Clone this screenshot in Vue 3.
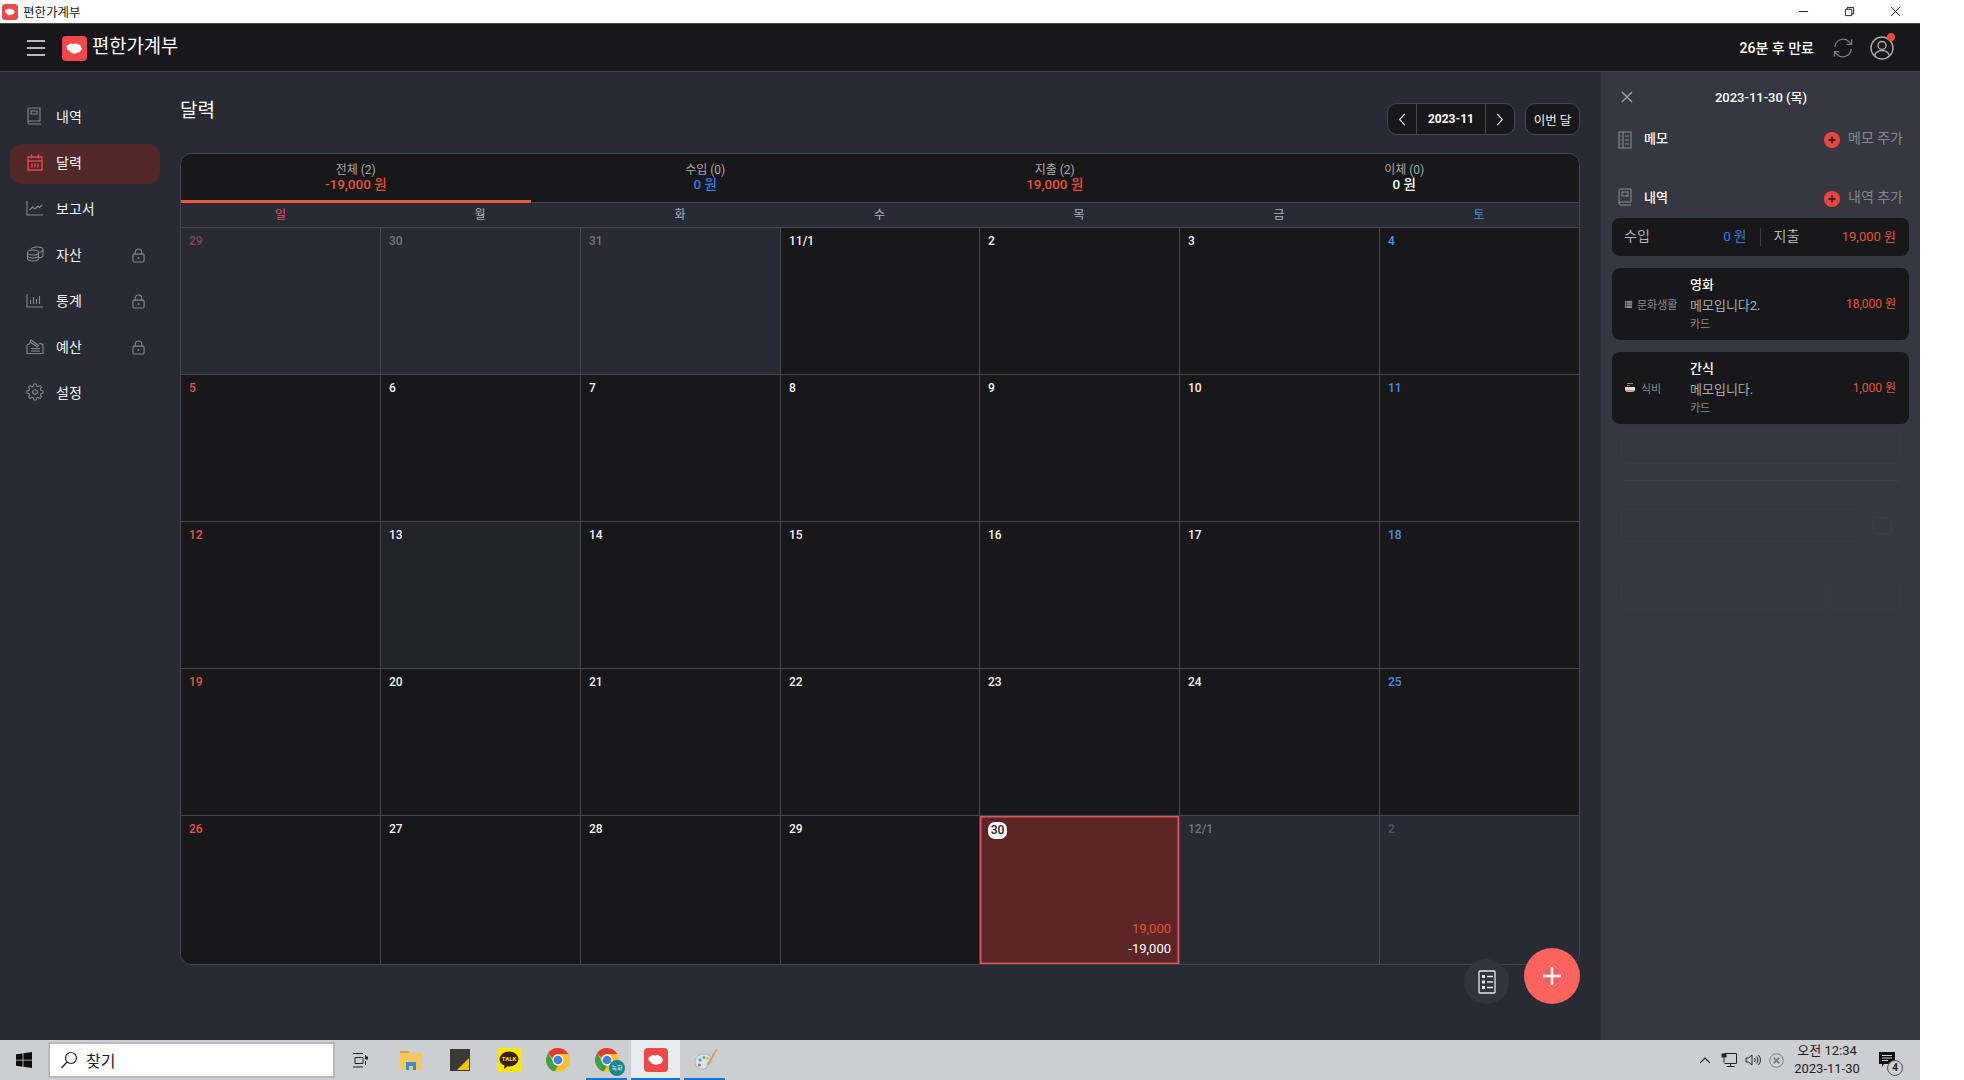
<script setup>
const navItems = [
  { label: '내역', locked: false, paths: ['M3.5 1H14v13H3.5A1.5 1.5 0 0 0 2 15.5v-13A1.5 1.5 0 0 1 3.5 1z', 'M2 15.5A1.5 1.5 0 0 0 3.5 17H15', 'M5 4h6v3H5z'] },
  { label: '달력', active: true, paths: ['M2 4h14v13H2z', 'M2 8h14', 'M5.5 1.5v4', 'M12.5 1.5v4', 'M6 10.5v4', 'M9 10.5v4', 'M12 10.5v4'] },
  { label: '보고서', paths: ['M1 2v14h16', 'M3.5 11l3-3 2.5 2 3-3 1.5 1.5 2.5-2.5'] },
  { label: '자산', locked: true, paths: ['M1.5 7.5C1.5 6 4 5 7 5s5.5 1 5.5 2.5S10 10 7 10 1.5 9 1.5 7.5z', 'M1.5 7.5v6C1.5 15 4 16 7 16s5.5-1 5.5-2.5v-6', 'M1.5 10.5C1.5 12 4 13 7 13s5.5-1 5.5-2.5', 'M5 4.5C5.5 3 8 2 11 2s6 1 6 2.5v6c0 1-1.5 2-4.5 2.5', 'M12.5 7.5c2.800-.3 4.500-1.500 4.500-3'] },
  { label: '통계', locked: true, paths: ['M1 3v13h16', 'M4.500 13V9', 'M7.500 13V6', 'M10.500 13V8', 'M13.500 13V5'] },
  { label: '예산', locked: true, paths: ['M1 8v8.500h16V7.500L13 6', 'M1 8l3-1.500', 'M5 3l7.500 5.500-1 1.500L4 5z', 'M5 11.500h9', 'M5 14h9'] },
  { label: '설정', gear: true, paths: ['M12 15a3 3 0 1 0 0-6 3 3 0 0 0 0 6z', 'M19.400 15a1.650 1.650 0 0 0 .33 1.820l.06.06a2 2 0 0 1 0 2.830 2 2 0 0 1-2.830 0l-.06-.06a1.650 1.650 0 0 0-1.820-.33 1.650 1.650 0 0 0-1 1.510V21a2 2 0 0 1-2 2 2 2 0 0 1-2-2v-.09A1.650 1.650 0 0 0 9 19.400a1.650 1.650 0 0 0-1.820.33l-.06.06a2 2 0 0 1-2.830 0 2 2 0 0 1 0-2.830l.06-.06a1.650 1.650 0 0 0 .33-1.820 1.650 1.650 0 0 0-1.510-1H3a2 2 0 0 1-2-2 2 2 0 0 1 2-2h.09A1.650 1.650 0 0 0 4.600 9a1.650 1.650 0 0 0-.33-1.820l-.06-.06a2 2 0 0 1 0-2.830 2 2 0 0 1 2.830 0l.06.06a1.650 1.650 0 0 0 1.820.33H9a1.650 1.650 0 0 0 1-1.510V3a2 2 0 0 1 2-2 2 2 0 0 1 2 2v.09a1.650 1.650 0 0 0 1 1.510 1.650 1.650 0 0 0 1.820-.33l.06-.06a2 2 0 0 1 2.830 0 2 2 0 0 1 0 2.830l-.06.06a1.650 1.650 0 0 0-.33 1.820V9a1.650 1.650 0 0 0 1.510 1H21a2 2 0 0 1 2 2 2 2 0 0 1-2 2h-.09a1.650 1.650 0 0 0-1.510 1z'] }
]

const tabs = [
  { label: '전체 (2)', value: '-19,000 원', tone: 'red', active: true },
  { label: '수입 (0)', value: '0 원', tone: 'blue' },
  { label: '지출 (2)', value: '19,000 원', tone: 'red' },
  { label: '이체 (0)', value: '0 원', tone: 'white' }
]

const weekdays = ['일', '월', '화', '수', '목', '금', '토']

const labels = [
  '29', '30', '31', '11/1', '2', '3', '4',
  '5', '6', '7', '8', '9', '10', '11',
  '12', '13', '14', '15', '16', '17', '18',
  '19', '20', '21', '22', '23', '24', '25',
  '26', '27', '28', '29', '30', '12/1', '2'
]
const outside = new Set([0, 1, 2, 33, 34])
const cells = labels.map((label, i) => ({
  label,
  outside: outside.has(i),
  sun: i % 7 === 0,
  sat: i % 7 === 6,
  first: i % 7 === 0,
  top: i < 7,
  hover: i === 15,
  today: i === 32
}))

const entries = [
  { cat: '문화생활', icon: 'film', name: '영화', memo: '메모입니다2.', pay: '카드', amount: '18,000 원' },
  { cat: '식비', icon: 'food', name: '간식', memo: '메모입니다.', pay: '카드', amount: '1,000 원' }
]

const blob = 'M4 8.500C2.500 8.500 1.500 7.500 1.800 6.300 1 5.500 2 3.800 3.500 4 4 2.800 6 2.600 7 3.300 8.200 2.500 10 2.700 10.700 3.700 12.300 3.500 13.300 4.800 13 5.800 14.200 6.300 14 8 13 8.300 12.800 9.700 11.200 10.500 10 10 9 11.200 6.600 11.300 5.800 10.300 4.800 10.500 3.800 9.700 4 8.500z'
</script>

<template>
  <div class="window">
    <div class="titlebar">
      <svg class="title-logo" viewBox="0 0 16 16"><rect width="16" height="16" rx="3.500" fill="#f04848" /><path :d="blob" fill="#fff" transform="translate(8 8) scale(.8) translate(-7.900 -6.900)" /></svg>
      <span class="title-text">편한가계부</span>
      <div class="win-controls">
        <svg viewBox="0 0 12 12" class="wc wc-min"><path d="M1 6h10" stroke="#111" /></svg>
        <svg viewBox="0 0 12 12" class="wc wc-res"><path d="M1.500 3.500h7v7h-7zM3.500 3.500v-2h7v7h-2" fill="none" stroke="#111" /></svg>
        <svg viewBox="0 0 12 12" class="wc"><path d="M1 1l10 10M11 1L1 11" stroke="#111" /></svg>
      </div>
    </div>

    <header class="appbar">
      <svg class="burger" viewBox="0 0 18 16"><path d="M0 1h18M0 8h18M0 15h18" stroke="#f2f2f2" stroke-width="1.600" /></svg>
      <svg class="app-logo" viewBox="0 0 16 16"><rect width="16" height="16" rx="2.500" fill="#f04848" /><path :d="blob" fill="#fff" transform="translate(8 8) scale(.8) translate(-7.900 -6.900)" /></svg>
      <span class="app-name">편한가계부</span>
      <span class="expiry">26분 후 만료</span>
      <svg class="refresh" viewBox="0 0 24 24" fill="none" stroke="#7b7e84" stroke-width="1.300"><path d="M3 11a9.200 9.200 0 0 1 16-5.500L21.500 8" /><path d="M21.500 2.500V8H16" /><path d="M21 13a9.200 9.200 0 0 1-16 5.500L2.500 16" /><path d="M2.500 21.500V16H8" /></svg>
      <div class="user">
        <svg viewBox="0 0 24 24" fill="none" stroke="#a9abaf" stroke-width="1.400"><circle cx="12" cy="12" r="11" /><circle cx="12" cy="9.500" r="4" /><path d="M4.500 20c1-3.800 4-5.500 7.500-5.500s6.500 1.700 7.500 5.500" /></svg>
        <i class="user-dot"></i>
      </div>
    </header>

    <div class="body">
      <nav class="sidebar">
        <a v-for="item in navItems" :key="item.label" class="nav-item" :class="{ active: item.active }">
          <svg class="nav-icon" :viewBox="item.gear ? '0 0 24 24' : '0 0 18 18'" fill="none" :stroke="item.active ? '#e5484a' : '#85888e'" :stroke-width="item.gear ? 1.500 : item.active ? 1.400 : 1.100">
            <path v-for="d in item.paths" :key="d" :d="d" />
          </svg>
          <span class="nav-label">{{ item.label }}</span>
          <svg v-if="item.locked" class="lock" viewBox="0 0 14 16" fill="none" stroke="#85888e" stroke-width="1.200"><rect x="1" y="6.500" width="12" height="8.500" rx="1.500" /><path d="M3.500 6.500V4.500a3.500 3.500 0 0 1 7 0v2" /><circle cx="7" cy="10.700" r="1" fill="#85888e" stroke="none" /></svg>
        </a>
      </nav>

      <main class="main">
        <div class="main-head">
          <h1 class="page-title">달력</h1>
          <div class="controls">
            <div class="picker">
              <button class="pick-arrow"><svg viewBox="0 0 8 14" fill="none" stroke="#e4e4e4" stroke-width="1.300"><path d="M7 1L1.500 7 7 13" /></svg></button>
              <span class="pick-month">2023-11</span>
              <button class="pick-arrow pick-next"><svg viewBox="0 0 8 14" fill="none" stroke="#e4e4e4" stroke-width="1.300"><path d="M1 1l5.500 6L1 13" /></svg></button>
            </div>
            <button class="this-month">이번 달</button>
          </div>
        </div>

        <section class="calendar">
          <div class="tabs">
            <div v-for="tab in tabs" :key="tab.label" class="tab" :class="{ active: tab.active }">
              <span class="tab-label">{{ tab.label }}</span>
              <span class="tab-value" :class="tab.tone">{{ tab.value }}</span>
            </div>
          </div>
          <div class="weekdays">
            <span v-for="(d, i) in weekdays" :key="d" :class="{ sun: i === 0, sat: i === 6 }">{{ d }}</span>
          </div>
          <div class="grid">
            <div
              v-for="(c, i) in cells"
              :key="i"
              class="cell"
              :class="{ outside: c.outside, sun: c.sun, sat: c.sat, first: c.first, top: c.top, hover: c.hover, today: c.today }"
            >
              <span class="day">{{ c.label }}</span>
              <div v-if="c.today" class="cell-amounts">
                <span class="red">19,000</span>
                <span>-19,000</span>
              </div>
            </div>
          </div>
        </section>

        <button class="fab-list">
          <svg viewBox="0 0 18 24" fill="none" stroke="#e8e8e8" stroke-width="1.300"><rect x="1" y="1" width="16" height="22" rx="1" /><path d="M4 5h3v3H4zM4 10.500h3v3H4zM4 16h3v3H4z" fill="#e8e8e8" stroke="none" /><path d="M9 6.500h6M9 12h6M9 17.500h6" /></svg>
        </button>
        <button class="fab-add">
          <svg viewBox="0 0 20 20"><path d="M10 1v18M1 10h18" stroke="#fff" stroke-width="2.400" /></svg>
        </button>
      </main>

      <aside class="panel">
        <div class="panel-head">
          <svg class="panel-close" viewBox="0 0 12 12"><path d="M1 1l10 10M11 1L1 11" stroke="#9a9ca1" stroke-width="1.500" /></svg>
          <span class="panel-date">2023-11-30 (목)</span>
        </div>

        <div class="section-row memo-row">
          <svg class="sec-icon" viewBox="0 0 14 18" fill="none" stroke="#8d9095"><rect x="1" y="1" width="12" height="16" /><path d="M5 1v16M2.500 5h1M2.500 9h1M2.500 13h1M7 5h4M7 9h4M7 13h4" /></svg>
          <span class="sec-title strong">메모</span>
          <span class="add-btn"><i class="add-dot"><svg viewBox="0 0 10 10"><path d="M5 1.500v7M1.500 5h7" stroke="#2b2b2b" stroke-width="1.800" /></svg></i>메모 주가</span>
        </div>

        <div class="section-row list-row">
          <svg class="sec-icon" viewBox="0 0 14 18" fill="none" stroke="#8d9095"><path d="M2.500 1H13v13H2.500A1.500 1.500 0 0 0 1 15.500v-13A1.500 1.500 0 0 1 2.500 1z" /><path d="M1 15.500A1.500 1.500 0 0 0 2.500 17H13" /><rect x="4" y="4" width="6" height="4" /></svg>
          <span class="sec-title">내역</span>
          <span class="add-btn"><i class="add-dot"><svg viewBox="0 0 10 10"><path d="M5 1.500v7M1.500 5h7" stroke="#2b2b2b" stroke-width="1.800" /></svg></i>내역 추가</span>
        </div>

        <div class="summary">
          <div class="sum-group">
            <span class="sum-label">수입</span>
            <span class="sum-val blue">0 원</span>
          </div>
          <i class="sum-div"></i>
          <div class="sum-group">
            <span class="sum-label">지출</span>
            <span class="sum-val red">19,000 원</span>
          </div>
        </div>

        <article v-for="e in entries" :key="e.name" class="entry">
          <div class="entry-cat">
            <svg v-if="e.icon === 'film'" class="cat-icon" viewBox="0 0 10 10"><path d="M1 1h8v8H1z" fill="#8a8d92" /><path d="M1 3.500h8M1 6h8M3 1v8" stroke="#3a3c40" stroke-width=".8" /></svg>
            <svg v-else class="cat-icon food" viewBox="0 0 12 12"><path d="M3 1.500h6M3 3.500h3" stroke="#b87a4a" /><path d="M1 5h10v2a3 3 0 0 1-3 3H4a3 3 0 0 1-3-3z" fill="#e6dfd8" /><path d="M2 9h8" stroke="#d45b5b" /></svg>
            <span>{{ e.cat }}</span>
          </div>
          <div class="entry-main">
            <span class="entry-name">{{ e.name }}</span>
            <span class="entry-memo">{{ e.memo }}</span>
            <span class="entry-pay">{{ e.pay }}</span>
          </div>
          <span class="entry-amount">{{ e.amount }}</span>
        </article>

        <div class="ghost">
          <div class="ghost-box ghost-a"></div>
          <div class="ghost-line"></div>
          <div class="ghost-row">
            <div class="ghost-box ghost-b"></div>
            <div class="ghost-box ghost-c"></div>
          </div>
          <div class="ghost-row ghost-last">
            <div class="ghost-box ghost-d"></div>
            <div class="ghost-box ghost-e"></div>
          </div>
        </div>
      </aside>
    </div>

    <footer class="taskbar">
      <svg class="tb-win" viewBox="0 0 16 16"><path d="M0 2.300l6.600-.9v6.300H0zM7.400 1.300L16 0v7.700H7.400zM0 8.500h6.600v6.200L0 13.800zM7.400 8.500H16V16l-8.600-1.200z" fill="#0d0d0d" /></svg>
      <div class="tb-search">
        <svg viewBox="0 0 18 18" fill="none" stroke="#222" stroke-width="1.200"><circle cx="11" cy="7" r="5.500" /><path d="M7 11l-5.500 6" /></svg>
        <span>찾기</span>
      </div>
      <div class="tb-apps">
        <div class="tb-slot tb-view">
          <svg viewBox="0 0 16 16" fill="none" stroke="#222"><path d="M1 1.500h10M3 5.500h8v6H3zM1 15h10" /><path d="M13.500 3v10" stroke-dasharray="4 2" /><rect x="13" y="4.500" width="3" height="3" fill="#222" stroke="none" /></svg>
        </div>
        <div class="tb-slot">
          <svg viewBox="0 0 24 24"><path d="M1 3h8l2 2h12v17H1z" fill="#f6c75c" /><path d="M1 3h8l2 2H1z" fill="#d9a23a" /><path d="M7 14h10v8h-3v-4h-4v4H7z" fill="#2f8fd8" /></svg>
        </div>
        <div class="tb-slot">
          <svg viewBox="0 0 24 24"><path d="M2 1h20v22H2z" fill="#383838" /><path d="M21 10v12H9z" fill="#f7c600" /></svg>
        </div>
        <div class="tb-slot">
          <svg viewBox="0 0 24 24"><rect width="24" height="24" rx="2" fill="#ffe600" /><ellipse cx="12" cy="11" rx="9.500" ry="7.500" fill="#3a1d1d" /><path d="M8 16l-1 5 5-4z" fill="#3a1d1d" /><text x="12" y="13" text-anchor="middle" font-size="6" font-weight="700" fill="#ffe600" font-family="Roboto, sans-serif">TALK</text></svg>
        </div>
        <div class="tb-slot">
          <svg viewBox="0 0 24 24"><circle cx="12" cy="12" r="12" fill="#fbc02d" /><path d="M12 0a12 12 0 0 1 10.400 6H12a6 6 0 0 0-5.700 4L2.200 5A12 12 0 0 1 12 0z" fill="#e53935" /><path d="M2.200 5l4.700 8a6 6 0 0 0 5.100 5l-3.500 5.500A12 12 0 0 1 2.200 5z" fill="#43a047" /><circle cx="12" cy="12" r="5.500" fill="#fff" /><circle cx="12" cy="12" r="4.300" fill="#3f7fe8" /></svg>
        </div>
        <div class="tb-slot tb-under tb-rec">
          <svg viewBox="0 0 24 24"><circle cx="12" cy="12" r="12" fill="#fbc02d" /><path d="M12 0a12 12 0 0 1 10.400 6H12a6 6 0 0 0-5.700 4L2.200 5A12 12 0 0 1 12 0z" fill="#e53935" /><path d="M2.200 5l4.700 8a6 6 0 0 0 5.100 5l-3.500 5.500A12 12 0 0 1 2.200 5z" fill="#43a047" /><circle cx="12" cy="12" r="5.500" fill="#fff" /><circle cx="12" cy="12" r="4.300" fill="#3f7fe8" /></svg>
          <span class="rec-badge">녹화</span>
        </div>
        <div class="tb-slot tb-under tb-current">
          <svg viewBox="0 0 24 24"><rect width="24" height="24" rx="4" fill="#f04848" /><path :d="blob" fill="#fff" transform="translate(12 12) scale(1.200) translate(-7.900 -6.900)" /></svg>
        </div>
        <div class="tb-slot tb-under">
          <svg viewBox="0 0 24 24"><path d="M2 14c0-5 4-8 9-8 5 0 8 2.500 8 6 0 2.500-2 3-3.500 3-1.500 0-2 1-1.500 2.500.5 2-1 3.500-4 3.500-4.500 0-8-3-8-7z" fill="#d8e2ea" stroke="#8aa0b0" stroke-width=".6" /><circle cx="7" cy="12" r="1.500" fill="#3f9ad8" /><circle cx="11" cy="9.500" r="1.500" fill="#7bb84a" /><circle cx="15" cy="10.500" r="1.400" fill="#e8b93a" /><circle cx="6.500" cy="17" r="1.500" fill="#d85a5a" /><path d="M23 1l-9 15 1.800 1L24 2z" fill="#c99a5a" /></svg>
        </div>
      </div>
      <div class="tb-tray">
        <svg class="tray-up" viewBox="0 0 12 7" fill="none" stroke="#222" stroke-width="1.100"><path d="M1 6l5-5 5 5" /></svg>
        <svg class="tray-net" viewBox="0 0 16 16" fill="none" stroke="#222"><path d="M3.500 1.500h12v10h-12M9.500 11.500v3M5.500 14.500h8" /><rect x=".5" y="1.500" width="5" height="4" fill="#222" stroke="none" /><path d="M3 5.500v5" /></svg>
        <svg class="tray-vol" viewBox="0 0 16 16" fill="none" stroke="#222"><path d="M1 6h2.500L7 3v10L3.500 10H1z" /><path d="M9.500 6a3 3 0 0 1 0 4M11.500 4.500a5 5 0 0 1 0 7M13.500 3a8 8 0 0 1 0 10" /></svg>
        <svg class="tray-x" viewBox="0 0 16 16"><circle cx="8" cy="8" r="7.200" fill="#cfd0d2" stroke="#77797c" /><path d="M5 5l6 6M11 5l-6 6" stroke="#77797c" stroke-width="1.800" /></svg>
        <div class="clock"><span>오전 12:34</span><span>2023-11-30</span></div>
        <div class="notify">
          <svg viewBox="0 0 16 16"><path d="M0 0h16v12H5l-2 3v-3H0z" fill="#111" /><path d="M3 3.500h10M3 6h10M3 8.500h6" stroke="#cfd0d2" /></svg>
          <span class="notify-count">4</span>
        </div>
      </div>
    </footer>
  </div>
</template>

<style>
html, body { margin: 0; background: #fff; }
</style>

<style scoped>
* { box-sizing: border-box; }
button { font: inherit; color: inherit; padding: 0; cursor: pointer; }

.window {
  width: 1920px;
  height: 1080px;
  display: flex;
  flex-direction: column;
  font-family: Roboto, "Noto Sans CJK KR", sans-serif;
  background: #282b33;
  color: #fff;
  overflow: hidden;
}

/* Title bar */
.titlebar { height: 23px; flex: none; background: #fff; display: flex; align-items: center; padding-left: 2px; color: #222; }
.title-logo { width: 16px; height: 16px; }
.title-text { margin-left: 5px; font-size: 12.500px; }
.win-controls { margin-left: auto; display: flex; align-items: center; padding-right: 19px; gap: 35px; }
.wc { width: 11px; height: 11px; display: block; }

/* App bar */
.appbar { height: 49px; flex: none; background: #18181b; border-top: 1px solid #4a4a4a; border-bottom: 1px solid #3f424a; display: flex; align-items: center; }
.burger { width: 18px; height: 16px; margin-left: 27px; }
.app-logo { width: 25px; height: 25px; margin-left: 17px; margin-top: 2px; }
.app-name { margin-left: 5px; font-size: 18.800px; margin-top: -7px; }
.expiry { margin-left: auto; font-size: 14px; font-weight: 500; margin-top: -1px; }
.refresh { width: 22px; height: 22px; margin-left: 18px; }
.user { width: 24px; height: 24px; margin-left: 16px; margin-right: 26px; position: relative; }
.user svg { width: 24px; height: 24px; display: block; }
.user-dot { position: absolute; top: -3px; right: -1px; width: 8px; height: 8px; border-radius: 50%; background: #f0483e; }

/* Body */
.body { height: 968px; flex: none; display: flex; }

.sidebar { width: 180px; flex: none; padding: 26px 20px 0 10px; display: flex; flex-direction: column; gap: 6px; }
.nav-item { height: 40px; border-radius: 12px; display: flex; align-items: center; padding: 0 15px 4px 16px; font-size: 14px; }
.nav-item.active { background: #532829; }
.nav-icon { width: 18px; height: 18px; flex: none; }
.nav-label { margin-left: 12px; color: #f4f4f4; }
.lock { width: 13px; height: 15px; margin-left: auto; margin-top: 3px; }

.main { width: 1420px; flex: none; padding: 28px 20px 0 0; position: relative; }
.main-head { display: flex; justify-content: space-between; align-items: flex-start; height: 35px; margin-bottom: 18px; }
.page-title { margin: 0; font-size: 19px; font-weight: 400; line-height: 22px; }
.controls { display: flex; gap: 10px; margin-top: 3px; }
.picker { display: flex; width: 128px; height: 32px; background: #18181b; border: 1px solid #44474f; border-radius: 10px; overflow: hidden; }
.pick-arrow { width: 28px; flex: none; background: none; border: 0; display: flex; align-items: center; justify-content: center; }
.pick-arrow svg { width: 8px; height: 13px; }
.pick-month { flex: 1; border-left: 1px solid #44474f; border-right: 1px solid #44474f; text-align: center; line-height: 30px; font-size: 12px; font-weight: 700; }
.this-month { width: 55px; height: 32px; background: #18181b; border: 1px solid #44474f; border-radius: 10px; font-size: 12.500px; color: #f0f0f0; }

/* Calendar */
.calendar { width: 1400px; height: 812px; border: 1px solid #44474f; border-radius: 12px; overflow: hidden; background: #18181b; }
.tabs { display: grid; grid-template-columns: repeat(4, 1fr); height: 49px; border-bottom: 1px solid #44474f; background: #18181b; }
.tab { display: flex; flex-direction: column; align-items: center; justify-content: flex-start; padding-top: 10px; position: relative; }
.tab.active::after { content: ""; position: absolute; left: 0; right: 0; bottom: -1px; height: 3px; background: #e8593f; }
.tab-label { font-size: 12px; line-height: 13px; color: #a5a8ad; }
.tab-value { font-size: 13.500px; line-height: 16px; font-weight: 500; margin-top: -1px; }
.red { color: #e8503a; }
.blue { color: #2c7ce5; }
.white { color: #fff; }

.weekdays { display: grid; grid-template-columns: 199px 200px 200px 199px 200px 200px 200px; height: 25px; background: #282b33; border-bottom: 1px solid #44474f; font-size: 12px; color: #aeb1b6; text-align: center; line-height: 25px; }
.weekdays .sun { color: #e05555; }
.weekdays .sat { color: #4a90e2; }

.grid { display: grid; grid-template-columns: 199px 200px 200px 199px 200px 200px 200px; grid-template-rows: 146px 147px 147px 147px 149px; }
.cell { background: #18181b; border-left: 1px solid #44474f; border-top: 1px solid #44474f; padding: 5px 8px 0; position: relative; font-size: 12px; }
.cell.first { border-left: 0; }
.cell.top { border-top: 0; }
.cell.hover { background: #232427; }
.cell.outside { background: #282b33; }
.day { font-weight: 500; color: #f4f4f4; line-height: 16px; display: block; }
.cell.sun .day { color: #e9504e; }
.cell.sat .day { color: #4a90e2; }
.cell.outside .day { color: #74777c; }
.cell.outside.sun .day { color: #7e4a50; }
.cell.outside.sat .day { color: #41597d; }
.cell.today { background: #5c2626; box-shadow: inset 0 0 0 1.500px #dd5555; }
.cell.today .day { display: inline-block; width: 19px; height: 17px; line-height: 17px; background: #fff; color: #1d2026; border-radius: 7px; text-align: center; margin-top: 1px; }
.cell-amounts { position: absolute; right: 8px; bottom: 5px; display: flex; flex-direction: column; align-items: flex-end; font-size: 13px; line-height: 20px; }

.fab-list { position: absolute; right: 91px; bottom: 36px; width: 45px; height: 45px; border-radius: 50%; border: 0; background: #32353d; display: flex; align-items: center; justify-content: center; }
.fab-list svg { width: 18px; height: 24px; }
.fab-add { position: absolute; right: 20px; bottom: 36px; width: 56px; height: 56px; border-radius: 50%; border: 0; background: #fb6360; display: flex; align-items: center; justify-content: center; }
.fab-add svg { width: 20px; height: 20px; }

/* Right panel */
.panel { width: 320px; flex: none; background: #353841; border-left: 1px solid #2c2f36; padding-top: 14px; }
.panel-head { height: 24px; position: relative; display: flex; align-items: center; justify-content: center; }
.panel-date { font-size: 13px; font-weight: 500; margin-left: 1px; margin-top: -4px; }
.panel-close { position: absolute; left: 20px; top: 5px; width: 12px; height: 12px; }
.section-row { height: 24px; display: flex; align-items: center; padding: 0 17px 0 17px; }
.memo-row { margin-top: 16px; }
.memo-row .sec-icon { margin-top: 3px; }
.list-row { margin-top: 35px; }
.sec-icon { width: 14px; height: 18px; flex: none; }
.sec-title { margin-left: 12px; font-size: 13px; font-weight: 500; margin-top: -2px; }
.add-btn { margin-left: auto; display: flex; align-items: center; font-size: 14px; color: #84878d; padding-bottom: 2px; }
.add-dot { width: 16px; height: 16px; border-radius: 50%; background: #f4433c; display: flex; align-items: center; justify-content: center; margin-right: 8px; margin-top: 5px; }
.add-dot svg { width: 10px; height: 10px; }

.summary { width: 297px; height: 38px; margin: 9px 0 0 11px; background: #18181b; border-radius: 8px; display: flex; align-items: center; padding: 0 13px 4px 12px; font-size: 13px; }
.sum-group { flex: 1; display: flex; justify-content: space-between; align-items: center; }
.sum-label { color: #b0b3b8; font-size: 14px; }
.sum-div { width: 1px; height: 18px; background: #3d3f45; margin: 4px 13px 0; flex: none; }
.sum-val.blue { font-size: 13.500px; }

.entry { width: 297px; height: 72px; margin: 12px 0 0 11px; background: #18181b; border-radius: 8px; display: flex; align-items: center; padding: 0 13px 0 12px; }
.entry-cat { width: 66px; flex: none; font-size: 11px; color: #85888d; display: flex; align-items: center; gap: 4px; }
.cat-icon { width: 9px; height: 9px; }
.cat-icon.food { width: 12px; height: 12px; margin-right: 1px; }
.entry-main { flex: 1; display: flex; flex-direction: column; }
.entry-name { font-size: 13px; line-height: 20px; font-weight: 500; color: #fff; }
.entry-memo { font-size: 13px; line-height: 21px; color: #a9acb1; }
.entry-pay { font-size: 11px; line-height: 17px; color: #85888d; }
.entry-amount { font-size: 12px; color: #e8503a; margin-bottom: 4px; }

.ghost { margin: 6px 20px 0 20px; }
.ghost-box { border: 1px solid #383b44; border-radius: 4px; }
.ghost-a { height: 34px; }
.ghost-line { height: 1px; background: #3a3d46; margin-top: 16px; }
.ghost-row { display: flex; justify-content: space-between; margin-top: 28px; align-items: center; }
.ghost-b { width: 242px; height: 33px; }
.ghost-c { width: 19px; height: 17px; margin-right: 8px; border-color: #3b3e47; }
.ghost-last { margin-top: 37px; }
.ghost-d { width: 205px; height: 31px; }
.ghost-e { width: 72px; height: 31px; }

/* Taskbar */
.taskbar { height: 40px; flex: none; background: #cdced1; display: flex; align-items: center; color: #222; }
.tb-win { width: 16px; height: 16px; margin-left: 16px; flex: none; }
.tb-search { width: 287px; height: 36px; margin-left: 16px; background: #fff; border: 2px solid #b9babc; display: flex; align-items: center; padding-left: 10px; flex: none; }
.tb-search svg { width: 18px; height: 18px; }
.tb-search span { margin-left: 8px; font-size: 16px; }
.tb-apps { display: flex; margin-left: 2px; height: 40px; }
.tb-slot { width: 49px; height: 40px; display: flex; align-items: center; justify-content: center; position: relative; }
.tb-slot svg { width: 24px; height: 24px; }
.tb-view { margin-left: -2px; }
.tb-view svg { width: 16px; height: 16px; }
.tb-slot + .tb-slot { left: 2px; }
.tb-under::after { content: ""; position: absolute; left: 4px; right: 4px; bottom: 0; height: 2px; background: #0f78d4; }
.tb-current { background: #e9eaeb; }
.tb-current::after { left: 0; right: 0; }
.rec-badge { position: absolute; right: 6px; bottom: 4px; width: 16px; height: 16px; border-radius: 50%; background: #13888f; color: #d8f2f2; font-size: 6px; line-height: 16px; text-align: center; }
.tb-tray { margin-left: auto; display: flex; align-items: center; height: 40px; padding-right: 17px; }
.tray-up { width: 12px; height: 7px; }
.tray-net { width: 16px; height: 16px; margin-left: 10px; }
.tray-vol { width: 16px; height: 16px; margin-left: 8px; }
.tray-x { width: 15px; height: 15px; margin-left: 8px; }
.clock { display: flex; flex-direction: column; align-items: center; margin-left: 8px; font-size: 13px; line-height: 18px; width: 70px; color: #222; }
.notify { width: 24px; height: 24px; margin-left: 17px; position: relative; }
.notify svg { width: 16px; height: 16px; position: absolute; left: 0; top: 4px; }
.notify-count { position: absolute; right: 0; bottom: -4px; width: 16px; height: 16px; border-radius: 50%; background: #cdced1; border: 1px solid #555; font-size: 10px; font-weight: 700; line-height: 14px; text-align: center; }
</style>
